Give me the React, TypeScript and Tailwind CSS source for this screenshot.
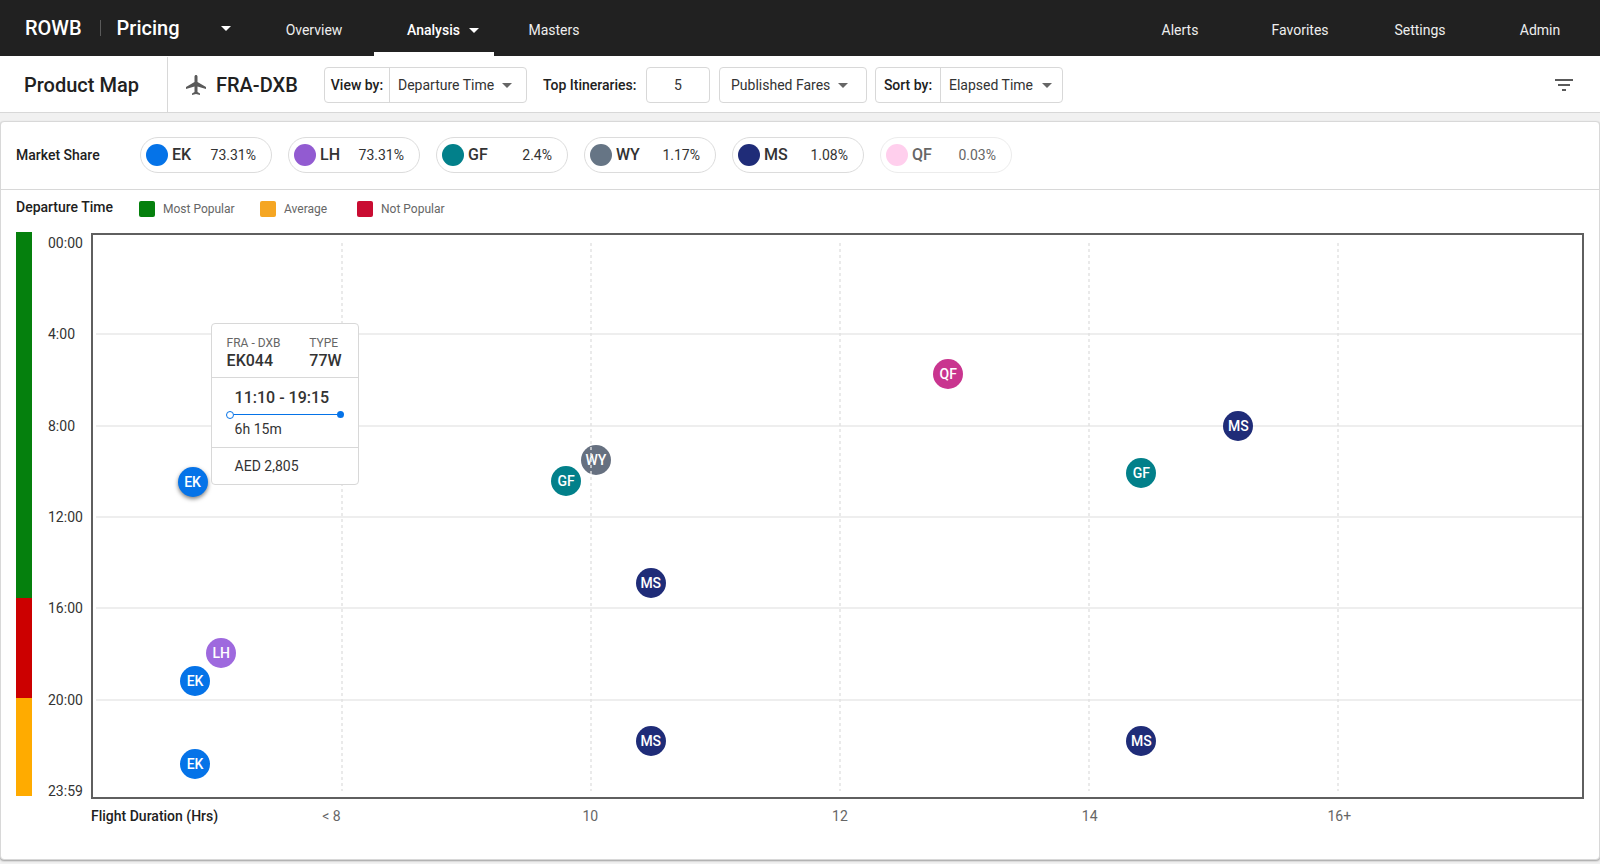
import { useState } from "react";
import clsx from "clsx";
import { MdArrowDropDown, MdFilterList, MdLocalAirport } from "react-icons/md";

interface Carrier {
  code: string;
  share: string;
  dot: string;
  muted?: boolean;
}

interface Flight {
  id: string;
  code: string;
  hours: number;
  time: number;
  active?: boolean;
}

const carriers: Carrier[] = [
  { code: "EK", share: "73.31%", dot: "bg-[#0573e8]" },
  { code: "LH", share: "73.31%", dot: "bg-[#925bd1]" },
  { code: "GF", share: "2.4%", dot: "bg-[#02808a]" },
  { code: "WY", share: "1.17%", dot: "bg-[#667585]" },
  { code: "MS", share: "1.08%", dot: "bg-[#1f2c78]" },
  { code: "QF", share: "0.03%", dot: "bg-[#ffcfed]", muted: true },
];

const markerColors: Record<string, string> = {
  EK: "bg-[#0573e8]",
  LH: "bg-[#9e69de]",
  GF: "bg-[#02808a]",
  WY: "bg-[#667080]",
  MS: "bg-[#1f2c78]",
  QF: "bg-[#c9358f]",
};

// hours = flight duration, time = departure hour of the day
const flights: Flight[] = [
  { id: "ek-1", code: "EK", hours: 6.8, time: 10.46, active: true },
  { id: "ek-2", code: "EK", hours: 6.82, time: 19.18 },
  { id: "ek-3", code: "EK", hours: 6.82, time: 22.82 },
  { id: "lh-1", code: "LH", hours: 7.03, time: 17.95 },
  { id: "gf-1", code: "GF", hours: 9.8, time: 10.42 },
  { id: "wy-1", code: "WY", hours: 10.04, time: 9.5 },
  { id: "ms-1", code: "MS", hours: 10.48, time: 14.88 },
  { id: "ms-2", code: "MS", hours: 10.48, time: 21.81 },
  { id: "qf-1", code: "QF", hours: 12.87, time: 5.74 },
  { id: "gf-2", code: "GF", hours: 14.42, time: 10.07 },
  { id: "ms-3", code: "MS", hours: 14.42, time: 21.81 },
  { id: "ms-4", code: "MS", hours: 15.2, time: 8.02 },
];

const legend = [
  { label: "Most Popular", color: "bg-[#05800d]", width: "w-[121px]" },
  { label: "Average", color: "bg-[#f5a623]", width: "w-[97px]" },
  { label: "Not Popular", color: "bg-[#c90c32]", width: "w-[121px]" },
];

const timeLabels = ["00:00", "4:00", "8:00", "12:00", "16:00", "20:00", "23:59"];

const MIN_HOURS = 6;
const MAX_HOURS = 17.96;

function xPos(hours: number): string {
  return `${((hours - MIN_HOURS) / (MAX_HOURS - MIN_HOURS)) * 100}%`;
}

function yPos(time: number): string {
  return `${(time / 24) * 100}%`;
}

function NavLink({ label, active }: { label: string; active?: boolean }) {
  return (
    <a
      href="#"
      className={clsx(
        "flex w-[120px] items-center border-b-4 pt-2 text-sm",
        active ? "border-white pl-[33px] font-medium text-white" : "justify-center border-transparent text-[#eeeeee]"
      )}
    >
      {label}
      {active && <MdArrowDropDown size={24} className="ml-0.5" />}
    </a>
  );
}

function TopBar() {
  return (
    <header className="flex h-14 items-stretch bg-[#212121] text-white">
      <div className="flex w-[254px] items-center pl-[25px]">
        <span className="text-xl font-medium">ROWB</span>
        <span className="mr-4 ml-[18px] h-4 w-px bg-[#5a5a5a]" />
        <button className="flex flex-1 items-center justify-between pr-4 text-xl font-medium">
          Pricing
          <MdArrowDropDown size={24} />
        </button>
      </div>
      <nav className="flex">
        <NavLink label="Overview" />
        <NavLink label="Analysis" active />
        <NavLink label="Masters" />
      </nav>
      <nav className="ml-auto flex">
        <NavLink label="Alerts" />
        <NavLink label="Favorites" />
        <NavLink label="Settings" />
        <NavLink label="Admin" />
      </nav>
    </header>
  );
}

interface PickerProps {
  id: string;
  label?: string;
  options: string[];
  className: string;
}

function Picker({ id, label, options, className }: PickerProps) {
  return (
    <div className={clsx("flex h-9 rounded border border-[#d8d8d8] text-sm", className)}>
      {label && (
        <label htmlFor={id} className="flex w-[65px] shrink-0 items-center justify-center border-r border-[#d8d8d8] font-medium">
          {label}
        </label>
      )}
      <div className="relative flex-1">
        <select
          id={id}
          aria-label={label ? undefined : options[0]}
          className={clsx("h-full w-full appearance-none bg-transparent text-[#333333] outline-none", label ? "pl-2" : "pl-[11px]")}
        >
          {options.map((o) => <option key={o}>{o}</option>)}
        </select>
        <MdArrowDropDown
          size={24}
          className={clsx("pointer-events-none absolute top-[5px] text-[#666666]", id === "view-by" ? "right-[7px]" : label ? "right-[3px]" : "right-[11px]")}
        />
      </div>
    </div>
  );
}

function Toolbar() {
  const [top, setTop] = useState("5");

  return (
    <div className="flex h-[57px] items-center border-b border-[#d8d8d8] bg-white pt-px">
      <h1 className="flex h-full w-[168px] shrink-0 items-center border-r border-[#d8d8d8] pl-6 text-xl font-medium">
        Product Map
      </h1>
      <MdLocalAirport size={24} className="ml-4 shrink-0 text-[#5a5a5a]" />
      <h2 className="ml-2 w-[108px] shrink-0 text-xl font-medium">FRA-DXB</h2>
      <Picker id="view-by" label="View by:" options={["Departure Time", "Arrival Time"]} className="w-[203px]" />
      <label htmlFor="top" className="ml-4 w-[95px] text-sm font-medium">Top Itineraries:</label>
      <input
        id="top"
        value={top}
        onChange={(e) => setTop(e.target.value)}
        className="ml-2 h-9 w-16 rounded border border-[#d8d8d8] text-center text-sm text-[#333333] outline-none"
      />
      <Picker id="fares" options={["Published Fares", "Private Fares"]} className="ml-[9px] w-[148px]" />
      <Picker id="sort-by" label="Sort by:" options={["Elapsed Time", "Fare"]} className="ml-2 w-[188px]" />
      <button aria-label="Filter" className="mr-6 ml-auto text-[#5a5a5a]">
        <MdFilterList size={24} />
      </button>
    </div>
  );
}

function MarketShare() {
  return (
    <section className="flex h-[68px] items-center border-b border-[#d8d8d8] px-[15px] pb-0.5">
      <h3 className="w-[124px] text-sm font-medium">Market Share</h3>
      <div className="flex gap-4">
        {carriers.map((c) => (
          <button
            key={c.code}
            className={clsx(
              "flex h-9 w-[132px] items-center rounded-full border pr-[15px] pl-[5px]",
              c.muted ? "border-[#ececec] text-[#666666]" : "border-[#dcdcdc] text-[#333333]"
            )}
          >
            <span className={clsx("h-[22px] w-[22px] rounded-full", c.dot)} />
            <span className="ml-1 text-base font-medium">{c.code}</span>
            <span className="ml-auto text-sm">{c.share}</span>
          </button>
        ))}
      </div>
    </section>
  );
}

function FlightCard() {
  return (
    <div className="absolute bottom-full left-full -mb-[18px] ml-[3px] w-[148px] rounded border border-[#d8d8d8] bg-white text-left text-[#333333]">
      <div className="flex justify-between border-b border-[#d8d8d8] pt-2.5 pr-4 pb-[7px] pl-[15px]">
        <div>
          <p className="text-xs leading-[18px] text-[#666666]">FRA - DXB</p>
          <p className="text-base leading-[18px] font-medium">EK044</p>
        </div>
        <div>
          <p className="text-xs leading-[18px] text-[#666666]">TYPE</p>
          <p className="text-base leading-[18px] font-medium">77W</p>
        </div>
      </div>
      <div className="border-b border-[#d8d8d8] pt-2 pb-2">
        <p className="pl-[23px] text-base leading-[24px] font-medium">11:10 - 19:15</p>
        <div className="mt-px flex h-2 items-center px-[14px]">
          <span className="h-2 w-2 rounded-full border border-[#0573e8]" />
          <span className="h-px flex-1 bg-[#0573e8]" />
          <span className="h-[7px] w-[7px] rounded-full bg-[#0573e8]" />
        </div>
        <p className="pl-[23px] text-sm leading-5">6h 15m</p>
      </div>
      <p className="pl-[23px] text-sm leading-[36px]">AED 2,805</p>
    </div>
  );
}

function Plot() {
  return (
    <div className="mt-px flex-1 border-2 border-[#5f5f5f] pt-2 pb-1.5">
      <div className="relative h-full">
        {[4, 8, 12, 16, 20].map((t) => (
          <div
            key={t}
            className="absolute right-0 left-[3px] h-0.5 -translate-y-1/2 bg-[#eeeeee]"
            style={{ top: yPos(t) }}
          />
        ))}
        {flights.map((f) => (
          <button
            key={f.id}
            className={clsx(
              "absolute h-[30px] w-[30px] -translate-x-1/2 -translate-y-1/2 rounded-full text-center text-sm font-medium text-white",
              markerColors[f.code],
              f.active && "shadow-[0_2px_4px_rgba(0,0,0,0.5)]"
            )}
            style={{ left: xPos(f.hours), top: yPos(f.time) }}
          >
            {f.code}
          </button>
        ))}
        {[8, 10, 12, 14, 16].map((h) => (
          <div
            key={h}
            className="pointer-events-none absolute top-0 bottom-0 w-0.5 -translate-x-1/2 bg-[repeating-linear-gradient(to_bottom,rgba(225,225,225,0.7)_0px,rgba(225,225,225,0.7)_3px,transparent_3px,transparent_6px)]"
            style={{ left: xPos(h) }}
          />
        ))}
        {/* details of the hovered flight */}
        {flights.filter((f) => f.active).map((f) => (
          <div
            key={f.id}
            className="pointer-events-none absolute h-[30px] w-[30px] -translate-x-1/2 -translate-y-1/2"
            style={{ left: xPos(f.hours), top: yPos(f.time) }}
          >
            <FlightCard />
          </div>
        ))}
      </div>
    </div>
  );
}

function DepartureChart() {
  return (
    <section className="flex flex-1 flex-col px-[15px]">
      <div className="flex h-[42px] items-center">
        <h3 className="w-[123px] pb-2 text-sm font-medium">Departure Time</h3>
        {legend.map((l) => (
          <div key={l.label} className={clsx("flex items-center gap-2 pb-1", l.width)}>
            <span className={clsx("h-4 w-4 rounded-xs", l.color)} />
            <span className="text-xs text-[#666666]">{l.label}</span>
          </div>
        ))}
      </div>

      <div className="flex min-h-[480px] flex-1">
        <div className="mr-4 mb-[3px] flex w-4 flex-col">
          <div className="grow-[366] bg-[#05800d]" />
          <div className="grow-[100] bg-[#cc0000]" />
          <div className="grow-[98] bg-[#ffab00]" />
        </div>
        <div className="-mb-0.5 flex w-[43px] flex-col justify-between pt-px text-sm text-[#333333]">
          {timeLabels.map((t) => <span key={t}>{t}</span>)}
        </div>
        <Plot />
      </div>

      <div className="mt-[7px] ml-[75px] grid grid-cols-[100fr_50fr_100fr_100fr_100fr_100fr_48fr] pb-[33px] text-sm text-[#666666]">
        <div className="flex justify-between">
          <span className="font-medium text-[#212121]">Flight Duration (Hrs)</span>
          <span>&lt; 8</span>
        </div>
        <span />
        <span className="text-center">10</span>
        <span className="text-center">12</span>
        <span className="text-center">14</span>
        <span className="text-center">16+</span>
      </div>
    </section>
  );
}

export default function App() {
  return (
    <div className="flex min-h-screen flex-col bg-[#f1f1f1] font-['Roboto',sans-serif] text-[#212121]">
      <TopBar />
      <Toolbar />
      <main className="mt-2 mb-1 flex flex-1 flex-col rounded border border-[#d8d8d8] bg-white shadow-[0_1px_2px_rgba(0,0,0,0.35)]">
        <MarketShare />
        <DepartureChart />
      </main>
    </div>
  );
}
